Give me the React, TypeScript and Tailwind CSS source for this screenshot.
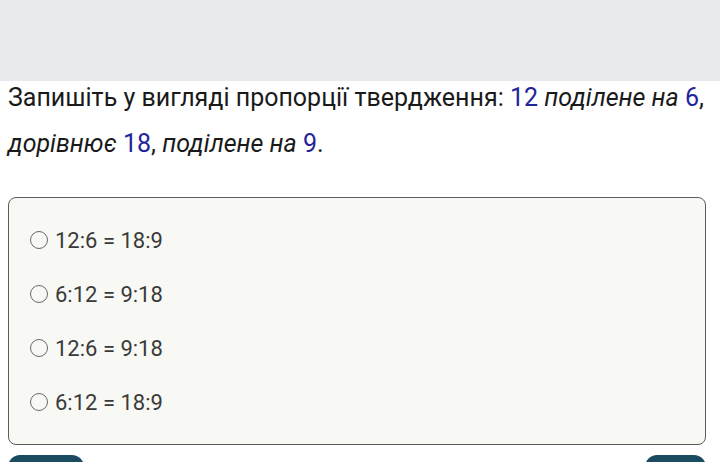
const options = ["12:6 = 18:9", "6:12 = 9:18", "12:6 = 9:18", "6:12 = 18:9"];

function Num({ children }: { children: React.ReactNode }) {
  return <span className="text-[#23239a] not-italic">{children}</span>;
}

export default function App() {
  return (
    <div
      className="w-[720px] h-[462px] overflow-hidden bg-white"
      style={{ fontFamily: "Roboto, 'Noto Sans', sans-serif" }}
    >
      {/* Top bar */}
      <div className="h-[81px] bg-[#e9eaee]" />

      {/* Question */}
      <p className="-mt-[6px] px-2 text-[25px] leading-[46px] text-[#1a1a1a]">
        Запишіть у вигляді пропорції твердження: <Num>12</Num>{" "}
        <i>поділене на</i> <Num>6</Num>,
        <br />
        <i>дорівнює</i> <Num>18</Num>, <i>поділене на</i> <Num>9</Num>.
      </p>

      {/* Options */}
      <div className="mx-2 mt-[30px] w-[698px] rounded-lg border border-[#5c5c5c] bg-[#f8f9f5] px-[21px] pt-[15px] pb-[15px]">
        {options.map((o) => (
          <label key={o} className="flex h-[54px] items-center gap-[7px] text-[22px] text-[#3a3a3a]">
            <span className="h-[18px] w-[18px] shrink-0 rounded-full border-[1.5px] border-[#6a6a6a] bg-[#f8f9f5]" />
            {o}
          </label>
        ))}
      </div>

      {/* Buttons */}
      <div className="mx-2 mt-[10px] flex w-[698px] justify-between">
        <div className="h-10 w-[76px] rounded-t-xl bg-[#1b4b60]" />
        <div className="h-10 w-[61px] rounded-t-xl bg-[#1b4b60]" />
      </div>
    </div>
  );
}
